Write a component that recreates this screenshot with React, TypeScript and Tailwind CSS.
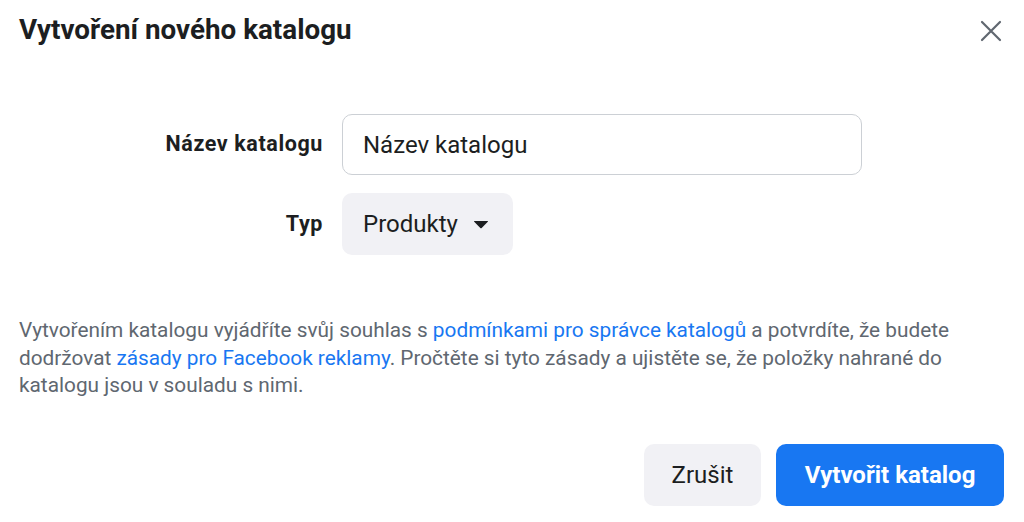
import React from 'react';

export default function App() {
  return (
    <div className="w-[1024px] h-[522px] bg-white text-[#1c1e21] font-['Roboto',_'Liberation_Sans',_sans-serif] overflow-hidden">
      {/* header */}
      <div className="flex items-start justify-between pl-[19px] pr-[22px] pt-[14px]">
        <h1 className="text-[27.8px] leading-[32px] font-bold">Vytvoření nového katalogu</h1>
        <button className="mt-[6px] w-[22px] h-[22px] text-[#606770]" aria-label="Zavřít">
          <svg viewBox="0 0 22 22" width="22" height="22" fill="none" stroke="currentColor" strokeWidth="2.2" strokeLinecap="round">
            <path d="M2 2 L20 20 M20 2 L2 20" />
          </svg>
        </button>
      </div>

      {/* form */}
      <div className="grid grid-cols-[323px_520px] gap-x-[19px] gap-y-[18px] items-center mt-[68px]">
        <label className="text-right text-[21.5px] tracking-[0.6px] font-bold">Název katalogu</label>
        <input
          className="h-[61px] rounded-[10px] border border-[#ccd0d5] px-[20px] text-[24px] text-[#1c1e21] placeholder:text-[#1c1e21] outline-none"
          placeholder="Název katalogu"
        />
        <label className="text-right text-[21.5px] tracking-[0.6px] font-bold">Typ</label>
        <div>
          <button className="h-[62px] w-[171px] rounded-[10px] bg-[#f1f1f5] flex items-center pl-[21px] gap-[15px] text-[24px]">
            <span>Produkty</span>
            <svg width="16" height="9" viewBox="0 0 16 9">
              <path d="M1.5 1 H14.5 Q15.5 1 14.8 1.8 L8.7 7.9 Q8 8.6 7.3 7.9 L1.2 1.8 Q0.5 1 1.5 1 Z" fill="#1c1e21" />
            </svg>
          </button>
        </div>
      </div>

      {/* terms */}
      <p className="mt-[62px] px-[19px] text-[20.8px] leading-[27.5px] text-[#606770]">
        Vytvořením katalogu vyjádříte svůj souhlas s{' '}
        <a className="text-[#1877f2]">podmínkami pro správce katalogů</a> a potvrdíte, že budete
        <br />
        dodržovat <a className="text-[#1877f2]">zásady pro Facebook reklamy</a>. Pročtěte si tyto zásady a ujistěte se, že položky nahrané do
        <br />
        katalogu jsou v souladu s nimi.
      </p>

      {/* actions */}
      <div className="flex justify-end gap-[15px] pr-[20px] mt-[44px]">
        <button className="h-[62px] w-[117px] rounded-[10px] bg-[#f1f1f5] text-[24px] text-[#1c1e21]">Zrušit</button>
        <button className="h-[62px] w-[228px] rounded-[10px] bg-[#1877f2] text-[24px] font-bold text-white">Vytvořit katalog</button>
      </div>
    </div>
  );
}
